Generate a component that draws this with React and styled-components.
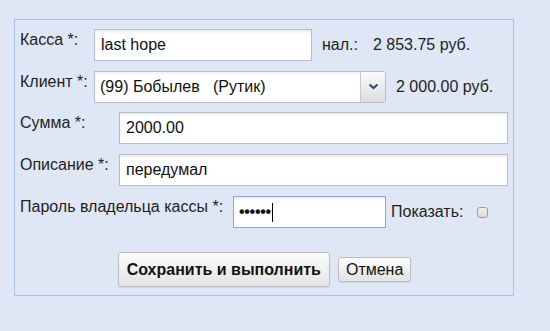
import React from "react";
import styled, { createGlobalStyle } from "styled-components";

const Global = createGlobalStyle`
  html, body { margin: 0; padding: 0; background: #dfe7f6; }
  body { font-family: "Liberation Sans", Arial, sans-serif; font-size: 16px; color: #1a1a1a; }
`;

const Page = styled.div`
  padding: 19px 0 0 14px;
  min-height: 331px;
  box-sizing: border-box;
`;

const Panel = styled.div`
  width: 500px;
  box-sizing: border-box;
  border: 1px solid #a9c1e8;
  padding: 9px 4px 8px 5px;
  display: flex;
  flex-direction: column;
  gap: 10px;
`;

const Row = styled.div`
  display: flex;
  align-items: center;
  height: ${(p) => p.$h || 32}px;
`;

const Label = styled.div`
  width: ${(p) => p.$w}px;
  flex: none;
  align-self: flex-start;
  padding-top: 2px;
  line-height: 18px;
  color: #1e1e1e;
  white-space: nowrap;
`;

const Field = styled.input`
  box-sizing: border-box;
  width: ${(p) => p.$w}px;
  height: 32px;
  margin: 0;
  padding: 0 6px;
  border: 1px solid #b3bdd2;
  background: #fff;
  box-shadow: inset 0 3px 3px -1px rgba(0, 0, 0, 0.08);
  font: inherit;
  color: #111;
  outline: none;
`;

const FakeField = styled.div`
  box-sizing: border-box;
  width: ${(p) => p.$w}px;
  height: 32px;
  padding: 0 5px;
  border: 1px solid ${(p) => (p.$focused ? "#84abe0" : "#b3bdd2")};
  background: #fff;
  box-shadow: inset 0 3px 3px -1px rgba(0, 0, 0, 0.08);
  display: flex;
  align-items: center;
  color: #111;
  white-space: pre;
`;

const Dots = styled.span`
  font-size: 16px;
  font-weight: bold;
  letter-spacing: -0.3px;
`;

const Caret = styled.span`
  display: inline-block;
  width: 1px;
  height: 19px;
  background: #000;
  margin-left: 1px;
`;

const Select = styled.div`
  box-sizing: border-box;
  width: ${(p) => p.$w}px;
  height: 32px;
  display: flex;
  border: 1px solid #b3bdd2;
  border-radius: 0 3px 3px 0;
  background: #fff;
  box-shadow: inset 0 3px 3px -1px rgba(0, 0, 0, 0.06);
  overflow: hidden;
`;

const SelectText = styled.div`
  flex: 1;
  display: flex;
  align-items: center;
  padding-left: 5px;
  white-space: pre;
  color: #111;
`;

const SelectButton = styled.div`
  width: 24px;
  flex: none;
  border-left: 1px solid #c3c8d2;
  background: linear-gradient(#fbfbfb, #e9e9e9 60%, #dcdcdc);
  display: flex;
  align-items: center;
  justify-content: center;
`;

const Value = styled.span`
  margin-left: ${(p) => p.$ml || 0}px;
  white-space: pre;
  color: #1e1e1e;
`;

const Check = styled.span`
  width: 11px;
  height: 11px;
  box-sizing: border-box;
  margin-left: ${(p) => p.$ml}px;
  border: 1px solid #9d9d9d;
  border-radius: 3px;
  background: linear-gradient(#f1f1f1, #d9d9d9);
`;

const ButtonRow = styled.div`
  display: flex;
  justify-content: center;
  align-items: center;
  gap: 8px;
  margin-top: 14px;
`;

const Button = styled.button`
  box-sizing: border-box;
  height: ${(p) => (p.$primary ? 35 : 25)}px;
  padding: 0 ${(p) => (p.$primary ? 8 : 7)}px;
  margin: 0;
  border: 1px solid #bdbdbd;
  border-radius: 3px;
  background: linear-gradient(#fdfdfd, #f0f0f0 50%, #e3e3e3);
  box-shadow: 0 1px 1px rgba(0, 0, 0, 0.08);
  font-family: inherit;
  font-size: 16px;
  font-weight: ${(p) => (p.$primary ? "bold" : "normal")};
  color: #111;
  cursor: pointer;
`;

export default function App() {
  return (
    <Page>
      <Global />
      <Panel>
        <Row>
          <Label $w={74}>Касса *:</Label>
          <Field $w={218} defaultValue="last hope" />
          <Value $ml={10}>нал.:</Value>
          <Value $ml={15}>2 853.75 руб.</Value>
        </Row>
        <Row $h={31}>
          <Label $w={74}>Клиент *:</Label>
          <Select $w={292}>
            <SelectText>(99) Бобылев   (Рутик)</SelectText>
            <SelectButton>
              <svg width="11" height="7" viewBox="0 0 11 7">
                <path d="M1.5 1.5 L5.5 5 L9.5 1.5" fill="none" stroke="#2f4e7e" strokeWidth="2.2" />
              </svg>
            </SelectButton>
          </Select>
          <Value $ml={10}>2 000.00 руб.</Value>
        </Row>
        <Row>
          <Label $w={99}>Сумма *:</Label>
          <Field $w={389} defaultValue="2000.00" />
        </Row>
        <Row>
          <Label $w={99}>Описание *:</Label>
          <Field $w={389} defaultValue="передумал" />
        </Row>
        <Row>
          <Label $w={213}>Пароль владельца кассы *:</Label>
          <FakeField $w={153} $focused>
            <Dots>••••••</Dots>
            <Caret />
          </FakeField>
          <Value $ml={5}>Показать:</Value>
          <Check $ml={14} />
        </Row>
        <ButtonRow>
          <Button $primary>Сохранить и выполнить</Button>
          <Button>Отмена</Button>
        </ButtonRow>
      </Panel>
    </Page>
  );
}
